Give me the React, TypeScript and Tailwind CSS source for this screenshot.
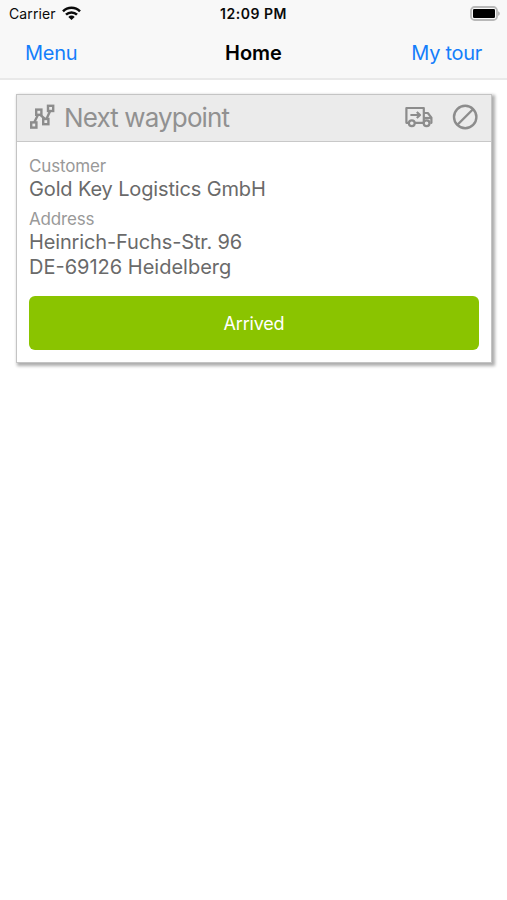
import type { ReactNode } from "react";

const WifiIcon = () => (
  <svg width="19" height="15" viewBox="0 0 19 15" fill="none">
    <g stroke="#0a0a0a" strokeWidth="2.5">
      <path d="M1 5.3a12 12 0 0 1 17 0" />
      <path d="M4 8.7a7.8 7.8 0 0 1 11 0" />
    </g>
    <path d="M9.5 14 6.3 10.9a4.6 4.6 0 0 1 6.4 0Z" fill="#0a0a0a" />
  </svg>
);

const BatteryIcon = () => (
  <svg width="31" height="15" viewBox="0 0 31 15" fill="none">
    <rect
      x="1"
      y="1"
      width="26"
      height="13"
      rx="3.6"
      stroke="#b8b8b8"
      strokeWidth="1.8"
    />
    <rect x="3" y="3" width="22" height="9" rx="1.2" fill="#000" />
    <path d="M28.2 5.2c2 .8 2 3.8 0 4.6Z" fill="#a8a8a8" />
  </svg>
);

const RouteIcon = () => (
  <svg
    width="26"
    height="26"
    viewBox="0 0 26 26"
    fill="none"
    stroke="#8c8c8c"
    strokeWidth="2.4"
  >
    <rect x="2.2" y="18.4" width="5.2" height="5.2" />
    <rect x="7.2" y="5.6" width="5.2" height="5.2" />
    <rect x="14.2" y="15" width="5.2" height="5.2" />
    <rect x="19" y="1.8" width="5.2" height="5.2" />
    <path d="M5.3 18.2 9 10.7M11 10.7l5 4.3M17.5 15l3.6-8" />
  </svg>
);

const TruckIcon = () => (
  <svg
    width="28"
    height="22"
    viewBox="0 0 28 22"
    fill="none"
    stroke="#8c8c8c"
    strokeWidth="2.2"
    strokeLinejoin="round"
  >
    <path d="M3.6 16.8H1.4V2h17.4v14.8H10M18.8 7h4l3.6 4.6v5.2h-1" />
    <path d="M19 12h7.4" />
    <path d="M5.4 9h9.4M11.8 6l3.2 3-3.2 3" />
    <circle cx="6.8" cy="17.2" r="2.9" fill="#ebebeb" />
    <circle cx="21.6" cy="17.2" r="2.9" fill="#ebebeb" />
  </svg>
);

const BlockIcon = () => (
  <svg
    width="26"
    height="26"
    viewBox="0 0 26 26"
    fill="none"
    stroke="#8c8c8c"
    strokeWidth="2.4"
  >
    <circle cx="13.2" cy="13" r="11.2" />
    <path d="m5.2 21 16-16" />
  </svg>
);

const Field = ({ label, children }: { label: string; children: ReactNode }) => (
  <div>
    <div className="text-[17px] leading-[21px] tracking-[-0.17px] text-[#999]">
      {label}
    </div>
    <div className="text-[20px] leading-[25px] tracking-[-0.14px] text-[#6a6a6a]">
      {children}
    </div>
  </div>
);

const StatusBar = () => (
  <div className="grid h-[26px] grid-cols-3 items-center pr-[6px] pl-[9px] text-[#0a0a0a]">
    <div className="flex items-center gap-[6px] text-[14px] tracking-[0.1px]">
      Carrier
      <WifiIcon />
    </div>
    <div className="-ml-[3px] text-center text-[14px] font-semibold tracking-[0.5px] whitespace-nowrap">
      12:09 PM
    </div>
    <div className="flex justify-end">
      <BatteryIcon />
    </div>
  </div>
);

const NavBar = () => (
  <nav className="grid h-[52px] grid-cols-3 items-center px-[25px] pt-[2px] text-[20px] tracking-[-0.3px] text-[#147efb]">
    <button className="text-left">Menu</button>
    <h1 className="text-center font-semibold tracking-normal text-black">
      Home
    </h1>
    <button className="text-right">My tour</button>
  </nav>
);

export default function App() {
  return (
    <div className="min-h-screen bg-white font-['Inter',sans-serif]">
      <header className="border-b-2 border-[#e9e9e9] bg-[#f8f8f8]">
        <StatusBar />
        <NavBar />
      </header>
      <main className="pt-[14px] pr-[15px] pl-4">
        <section className="h-[269px] border border-[#c4c4c4] bg-white shadow-[2px_2px_3px_1px_rgba(0,0,0,0.32)]">
          <div className="flex h-[47px] items-center border-b border-[#c8c8c8] bg-[#ebebeb] pr-[13px] pb-[2px] pl-3">
            <RouteIcon />
            <h2 className="ml-[9px] flex-1 text-[26px] tracking-[-0.87px] text-[#919191]">
              Next waypoint
            </h2>
            <TruckIcon />
            <div className="ml-[19px]">
              <BlockIcon />
            </div>
          </div>
          <div className="px-3 pt-[14px]">
            <div className="space-y-[7px]">
              <Field label="Customer">Gold Key Logistics GmbH</Field>
              <Field label="Address">
                Heinrich-Fuchs-Str. 96
                <br />
                <span className="tracking-normal">DE-69126 Heidelberg</span>
              </Field>
            </div>
            <button className="mt-4 h-[54px] w-full rounded-md bg-[#8ac400] text-[18px] tracking-[-0.2px] text-white">
              Arrived
            </button>
          </div>
        </section>
      </main>
    </div>
  );
}
